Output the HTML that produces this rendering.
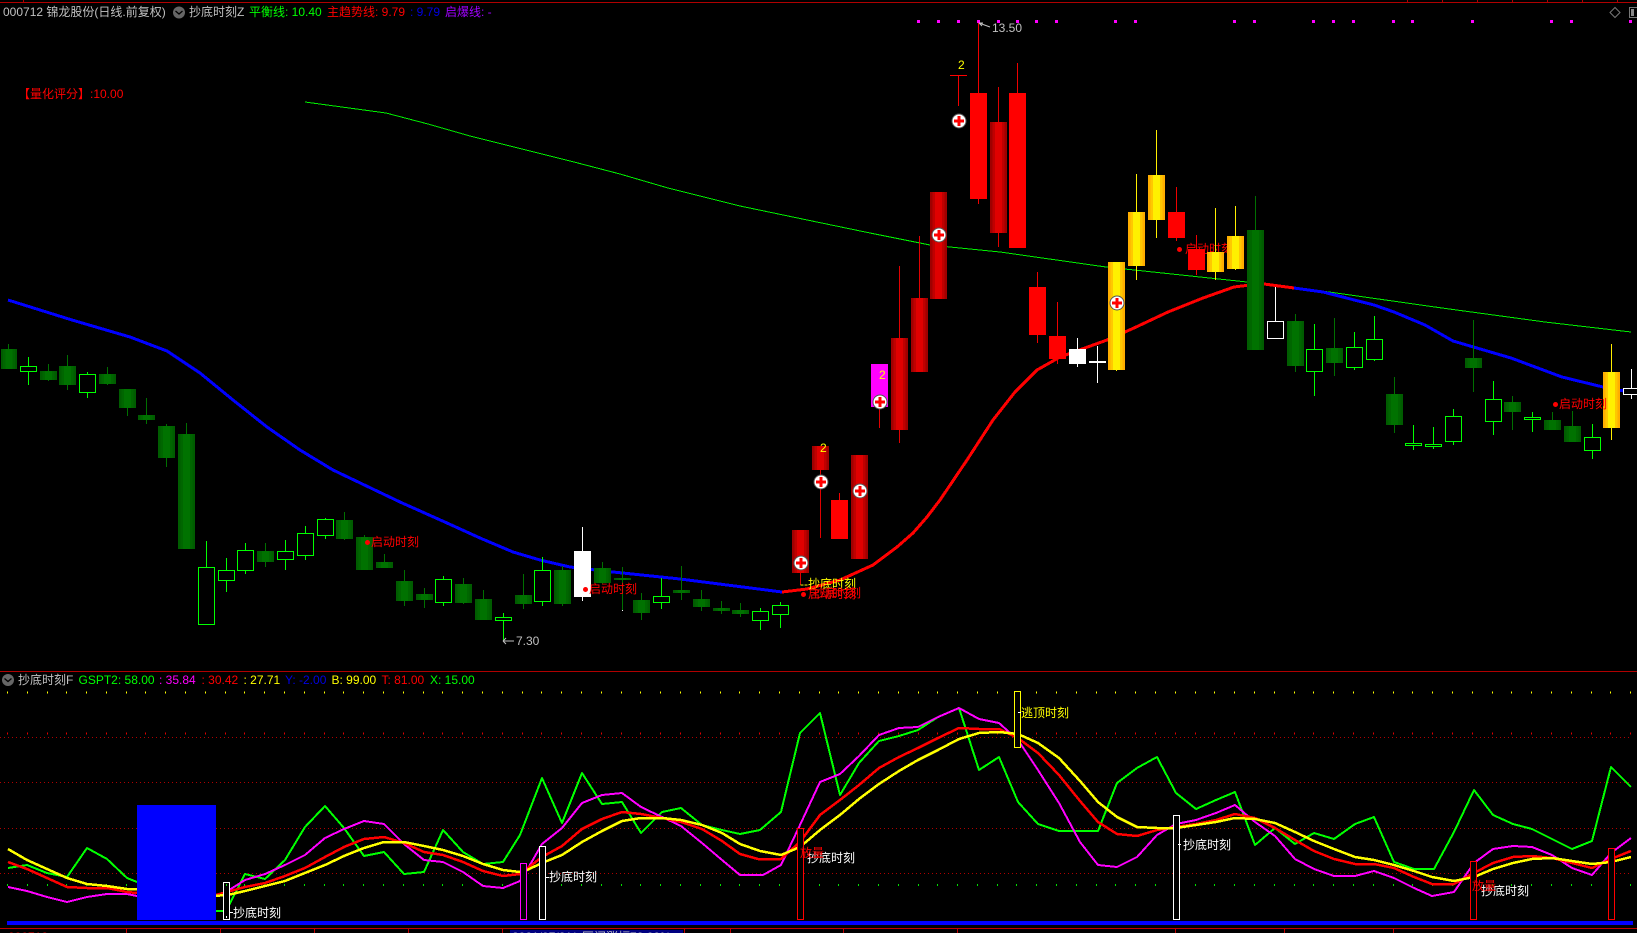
<!DOCTYPE html>
<html lang="zh"><head><meta charset="utf-8"><title>000712 锦龙股份</title>
<style>
html,body{margin:0;padding:0;background:#000;width:1637px;height:933px;overflow:hidden}
svg{display:block;position:absolute;left:0;top:0}
text{font-family:"Liberation Sans","WenQuanYi Zen Hei","Noto Sans CJK SC",sans-serif;font-size:12px;white-space:pre}
.c{shape-rendering:crispEdges}
.w{fill:none;stroke-width:1}
.l{fill:none;shape-rendering:crispEdges;stroke-linejoin:round}
</style></head><body>
<svg width="1637" height="933" viewBox="0 0 1637 933" xmlns="http://www.w3.org/2000/svg">
<defs>
<linearGradient id="gG"><stop offset="0" stop-color="#005c00"/><stop offset=".14" stop-color="#005c00"/><stop offset=".14" stop-color="#006600"/><stop offset=".28" stop-color="#006600"/><stop offset=".28" stop-color="#007200"/><stop offset=".72" stop-color="#007200"/><stop offset=".72" stop-color="#006600"/><stop offset=".86" stop-color="#006600"/><stop offset=".86" stop-color="#005c00"/><stop offset="1" stop-color="#005c00"/></linearGradient>
<linearGradient id="gR"><stop offset="0" stop-color="#a00000"/><stop offset=".14" stop-color="#a00000"/><stop offset=".14" stop-color="#c00000"/><stop offset=".28" stop-color="#c00000"/><stop offset=".28" stop-color="#e00000"/><stop offset=".72" stop-color="#e00000"/><stop offset=".72" stop-color="#c00000"/><stop offset=".86" stop-color="#c00000"/><stop offset=".86" stop-color="#a00000"/><stop offset="1" stop-color="#a00000"/></linearGradient>
<linearGradient id="gY"><stop offset="0" stop-color="#ffae00"/><stop offset=".14" stop-color="#ffae00"/><stop offset=".14" stop-color="#ffc800"/><stop offset=".28" stop-color="#ffc800"/><stop offset=".28" stop-color="#fff000"/><stop offset=".72" stop-color="#fff000"/><stop offset=".72" stop-color="#ffc800"/><stop offset=".86" stop-color="#ffc800"/><stop offset=".86" stop-color="#ffae00"/><stop offset="1" stop-color="#ffae00"/></linearGradient>
<path id="dots" d="M7 0h1M27 0h1M47 0h1M66 0h1M86 0h1M106 0h1M126 0h1M145 0h1M165 0h1M185 0h1M205 0h1M225 0h1M244 0h1M264 0h1M284 0h1M304 0h1M324 0h1M343 0h1M363 0h1M383 0h1M403 0h1M423 0h1M442 0h1M462 0h1M482 0h1M502 0h1M522 0h1M541 0h1M561 0h1M581 0h1M601 0h1M621 0h1M640 0h1M660 0h1M680 0h1M700 0h1M720 0h1M739 0h1M759 0h1M779 0h1M799 0h1M819 0h1M838 0h1M858 0h1M878 0h1M898 0h1M918 0h1M937 0h1M957 0h1M977 0h1M997 0h1M1016 0h1M1036 0h1M1056 0h1M1076 0h1M1096 0h1M1115 0h1M1135 0h1M1155 0h1M1175 0h1M1195 0h1M1214 0h1M1234 0h1M1254 0h1M1274 0h1M1294 0h1M1313 0h1M1333 0h1M1353 0h1M1373 0h1M1393 0h1M1412 0h1M1432 0h1M1452 0h1M1472 0h1M1492 0h1M1511 0h1M1531 0h1M1551 0h1M1571 0h1M1591 0h1M1610 0h1M1630 0h1"/>
<g id="plus"><circle r="7" fill="#fff" stroke="#555" stroke-width="1"/><path class="c" d="M-5 -1.500h10v3h-10zM-1.500 -5h3v10h-3z" fill="#f00"/></g>
</defs>
<rect width="1637" height="933" fill="#000"/>

<!-- frame -->
<path class="c" d="M0 2.500H1637M1407.500 0V2M1442.500 0V2M1477.500 0V2M1512.500 0V2M1547.500 0V2M1582.500 0V2M1617.500 0V2M23.500 0V2M0 671.500H1637" stroke="#b00000" fill="none"/>

<!-- header -->
<text x="3" y="16" fill="#c0c0c0">000712 锦龙股份(日线.前复权)</text>
<circle cx="179" cy="12.500" r="6" fill="#666"/><path d="M175.500 11l3.500 3 3.500-3" fill="none" stroke="#000" stroke-width="1.300"/>
<text x="189" y="16" fill="#c0c0c0">抄底时刻Z</text>
<text x="249" y="16" fill="#00ff00">平衡线: 10.40</text>
<text x="327" y="16" fill="#ff0000">主趋势线: 9.79</text>
<text x="410" y="16" fill="#0000e0">: 9.79</text>
<text x="445" y="16" fill="#a000ff">启爆线: -</text>
<text x="18" y="98" fill="#ff0000">【量化评分】:10.00</text>
<path d="M1615 7.500l5 5-5 5-5-5z" fill="none" stroke="#777" stroke-width="1"/>
<path class="c" d="M1637 7.500h-7.500v10h7.500" fill="none" stroke="#777"/><rect class="c" x="1631" y="9" width="3" height="7" fill="#888"/>

<!-- magenta dots -->
<path class="c" d="M917 20h3v3h-3zM937 20h3v3h-3zM957 20h3v3h-3zM977 20h3v3h-3zM997 20h3v3h-3zM1016 20h3v3h-3zM1035 20h3v3h-3zM1055 20h3v3h-3zM1114 20h3v3h-3zM1134 20h3v3h-3zM1233 20h3v3h-3zM1253 20h3v3h-3zM1312 20h3v3h-3zM1332 20h3v3h-3zM1352 20h3v3h-3zM1392 20h3v3h-3zM1411 20h3v3h-3zM1471 20h3v3h-3zM1550 20h3v3h-3zM1570 20h3v3h-3zM1629 20h3v3h-3z" fill="#ff00ff"/>

<!-- MA lines -->
<polyline class="l" stroke="#00ee00" stroke-width="1" points="305,102 386,113 428,124 470,136 522,149 574,162 620,174 668,188 740,206 800,218.500 870,233 930,245 1000,252 1106,267 1200,277 1247,282 1329,292 1442,308 1545,322 1631,332"/>
<polyline class="l" stroke="#0000ff" stroke-width="3" points="8,300 72,320 130,337 167,351 200,373 233,400 267,427 300,450 333,470 400,502 447,523 480,538 513,552 540,560 570,567 613,572 680,579 782,592"/>
<polyline class="l" stroke="#ff0000" stroke-width="3" points="782,592 807,589 840,580 873,565 897,547 913,533 927,517 940,500 967,460 993,420 1015,392 1037,370 1060,357 1107,340 1134,328 1168,312 1203,298 1234,287 1250,285 1264,284 1294,288"/>
<polyline class="l" stroke="#0000ff" stroke-width="3" points="1294,288 1323,292 1374,305 1394,312 1425,325 1453,341 1511,358 1562,377 1603,387 1624,391"/>

<!-- text behind candles -->
<circle cx="1179.500" cy="249.500" r="2.500" fill="#f00"/>
<text x="1185" y="253" fill="#f00">启动时刻</text>

<g class="c">
<!-- solid green wicks -->
<path class="w" stroke="#007000" d="M8.500 344V369M48.500 364V381M67.500 355V390M107.500 367V385M127.500 389V416M146.500 398V424M166.500 424V467M186.500 423V549M265.500 543V567M344.500 512V540M364.500 535V570M384.500 554V568M404.500 570V606M424.500 588V608M463.500 578V604M483.500 590V620M523.500 574V609M562.500 566V606M602.500 562V584M622.500 567V610M641.500 593V620M681.500 566V600M701.500 590V611M721.500 601V614M740.500 603V617M1255.500 196V350M1295.500 314V372M1334.500 318V376M1394.500 377V433M1473.500 320V392M1512.500 396V430M1552.500 412V430M1572.500 411V442"/>
<g fill="url(#gG)">
<rect x="1" y="349" width="16" height="20"/><rect x="40" y="371" width="17" height="9"/><rect x="59" y="366" width="17" height="19"/><rect x="99" y="374" width="17" height="10"/><rect x="119" y="389" width="17" height="19"/><rect x="138" y="415" width="17" height="5"/><rect x="158" y="426" width="17" height="32"/><rect x="178" y="434" width="17" height="115"/><rect x="257" y="551" width="17" height="11"/><rect x="336" y="520" width="17" height="19"/><rect x="356" y="537" width="17" height="33"/><rect x="376" y="562" width="17" height="6"/><rect x="396" y="581" width="17" height="20"/><rect x="416" y="594" width="17" height="6"/><rect x="455" y="584" width="17" height="19"/><rect x="475" y="599" width="17" height="21"/><rect x="515" y="595" width="17" height="9"/><rect x="554" y="570" width="17" height="34"/><rect x="594" y="568" width="17" height="15"/><rect x="614" y="578" width="17" height="2"/><rect x="633" y="600" width="17" height="13"/><rect x="673" y="590" width="17" height="3"/><rect x="693" y="599" width="17" height="8"/><rect x="713" y="608" width="17" height="3"/><rect x="732" y="610" width="17" height="4"/><rect x="1247" y="230" width="17" height="120"/><rect x="1287" y="321" width="17" height="45"/><rect x="1326" y="348" width="17" height="15"/><rect x="1386" y="394" width="17" height="31"/><rect x="1465" y="358" width="17" height="10"/><rect x="1504" y="402" width="17" height="10"/><rect x="1544" y="420" width="17" height="10"/><rect x="1564" y="426" width="17" height="16"/>
</g>
<rect x="622" y="610" width="1" height="1" fill="#fff"/>
<!-- hollow green -->
<path class="w" stroke="#00ff00" d="M28.500 357V385M87.500 372V398M206.500 541V625M226.500 558V592M245.500 543V574M285.500 540V570M305.500 526V560M325.500 518V539M443.500 576V606M503.500 613V641M542.500 557V606M661.500 578V609M760.500 608V630M780.500 602V628M1314.500 324V396M1354.500 332V370M1374.500 316V361M1413.500 425V450M1433.500 427V449M1453.500 409V445M1493.500 381V435M1532.500 412V432M1592.500 424V459"/>
<g fill="#000" stroke="#00ff00">
<rect x="20.500" y="366.500" width="16" height="5"/><rect x="79.500" y="374.500" width="16" height="18"/><rect x="198.500" y="567.500" width="16" height="57"/><rect x="218.500" y="570.500" width="16" height="10"/><rect x="237.500" y="550.500" width="16" height="20"/><rect x="277.500" y="551.500" width="16" height="8"/><rect x="297.500" y="533.500" width="16" height="22"/><rect x="317.500" y="519.500" width="16" height="16"/><rect x="435.500" y="579.500" width="16" height="23"/><rect x="495.500" y="617.500" width="16" height="3"/><rect x="534.500" y="570.500" width="16" height="31"/><rect x="653.500" y="596.500" width="16" height="6"/><rect x="752.500" y="611.500" width="16" height="9"/><rect x="772.500" y="605.500" width="16" height="9"/><rect x="1306.500" y="349.500" width="16" height="22"/><rect x="1346.500" y="347.500" width="16" height="20"/><rect x="1366.500" y="339.500" width="16" height="20"/><rect x="1405.500" y="443.500" width="16" height="2"/><rect x="1425.500" y="444.500" width="16" height="2"/><rect x="1445.500" y="416.500" width="16" height="25"/><rect x="1485.500" y="399.500" width="16" height="22"/><rect x="1524.500" y="417.500" width="16" height="2"/><rect x="1584.500" y="437.500" width="16" height="13"/>
</g>
<!-- white -->
<path class="w" stroke="#fff" d="M582.500 527V601M1077.500 338V367M1097.500 346V383M1275.500 287V321M1631.500 369V399"/>
<rect x="574" y="551" width="17" height="46" fill="#fff"/>
<rect x="1069" y="349" width="17" height="15" fill="#fff"/>
<rect x="1089" y="361" width="17" height="2" fill="#fff"/>
<rect x="1267.500" y="321.500" width="16" height="17" fill="#000" stroke="#fff"/>
<rect x="1623.500" y="388.500" width="16" height="6" fill="#000" stroke="#fff"/>
<!-- dark red -->
<path class="w" stroke="#e00000" d="M800.500 530V585M820.500 446V538M859.500 455V559M899.500 266V443M919.500 236V372M938.500 192V299M998.500 87V247M879.500 364V428"/>
<g fill="url(#gR)">
<rect x="792" y="530" width="17" height="43"/><rect x="812" y="446" width="17" height="24"/><rect x="851" y="455" width="17" height="104"/><rect x="891" y="338" width="17" height="92"/><rect x="911" y="298" width="17" height="74"/><rect x="930" y="192" width="17" height="107"/><rect x="990" y="122" width="17" height="111"/>
</g>
<rect x="871" y="364" width="17" height="43" fill="#ff00ff"/>
<!-- bright red -->
<path class="w" stroke="#f00000" d="M839.500 493V539M958.500 75V106M978.500 23V204M1017.500 63V248M1037.500 272V343M1057.500 302V364M1176.500 187V241M1196.500 235V275"/>
<g fill="#ff0000">
<rect x="831" y="500" width="17" height="39"/><rect x="950" y="75" width="17" height="1"/><rect x="970" y="93" width="17" height="106"/><rect x="1009" y="93" width="17" height="155"/><rect x="1029" y="287" width="17" height="48"/><rect x="1049" y="336" width="17" height="23"/><rect x="1168" y="212" width="17" height="26"/><rect x="1188" y="249" width="17" height="21"/>
</g>
<!-- gold -->
<path class="w" stroke="#ffee00" d="M1116.500 262V371M1136.500 174V280M1156.500 130V238M1215.500 208V280M1235.500 206V270M1611.500 344V440"/>
<g fill="url(#gY)">
<rect x="1108" y="262" width="17" height="108"/><rect x="1128" y="212" width="17" height="54"/><rect x="1148" y="175" width="17" height="45"/><rect x="1207" y="252" width="17" height="20"/><rect x="1227" y="236" width="17" height="33"/><rect x="1603" y="372" width="17" height="56"/>
</g>
</g>

<!-- plus markers -->
<use href="#plus" x="959" y="121"/><use href="#plus" x="939" y="235"/><use href="#plus" x="1117" y="303"/><use href="#plus" x="801" y="563"/><use href="#plus" x="821" y="482"/><use href="#plus" x="860" y="491"/><use href="#plus" x="880" y="402"/>
<text x="958" y="69" fill="#ffff00">2</text>
<text x="820" y="452" fill="#ffff00">2</text>
<text x="879" y="379" fill="#ffff00">2</text>

<!-- price labels -->
<path d="M979 23l11 4M979 23l3 3M979 23l4 0" fill="none" stroke="#c0c0c0"/>
<text x="992" y="32" fill="#c0c0c0">13.50</text>
<path d="M503 641h11M503 641l3-3M503 641l3 3" fill="none" stroke="#c0c0c0"/>
<text x="516" y="645" fill="#c0c0c0">7.30</text>

<!-- main-panel annotations -->
<circle cx="367.500" cy="542.500" r="2.500" fill="#f00"/><text x="371" y="546" fill="#f00">启动时刻</text>
<circle cx="585.500" cy="589.500" r="2.500" fill="#f00"/><text x="589" y="593" fill="#f00">启动时刻</text>
<text x="800" y="588" fill="#ffff00">--抄底时刻</text>
<circle cx="803.500" cy="594.500" r="2.500" fill="#f00"/><text x="808" y="598" fill="#f00">启动时刻</text><text x="813" y="597" fill="#f00">抄底时刻</text>
<circle cx="1555.500" cy="404.500" r="2.500" fill="#f00"/><text x="1559" y="408" fill="#f00">启动时刻</text>

<!-- lower header -->
<circle cx="8" cy="680" r="6" fill="#666"/><path d="M4.500 678.500l3.500 3 3.500-3" fill="none" stroke="#000" stroke-width="1.300"/>
<text x="18" y="684" fill="#c0c0c0">抄底时刻F</text>
<text x="78.500" y="684" fill="#00ff00">GSPT2: 58.00</text>
<text x="159" y="684" fill="#ff00ff">: 35.84</text>
<text x="201.500" y="684" fill="#ff0000">: 30.42</text>
<text x="243.500" y="684" fill="#ffff00">: 27.71</text>
<text x="285" y="684" fill="#0000e0">Y: -2.00</text>
<text x="331.500" y="684" fill="#ffff00">B: 99.00</text>
<text x="381.500" y="684" fill="#ff0000">T: 81.00</text>
<text x="430" y="684" fill="#00ff00">X: 15.00</text>

<!-- oscillator grid -->
<g class="c" fill="none">
<use href="#dots" y="692.500" stroke="#ffff00" stroke-width="2"/>
<use href="#dots" y="733.500" stroke="#e00000" stroke-width="2"/>
<use href="#dots" y="885" stroke="#00e000" stroke-width="2"/>
<path stroke="#b00000" stroke-dasharray="1 3" d="M0 737.500H1632M0 782.500H1632M0 828.500H1632M0 873.500H1632"/>
</g>

<!-- oscillator lines -->
<polyline class="l" stroke="#00ff00" stroke-width="2" points="8,868 27,865 47,873 67,877 87,848 107,859 127,878 137,882"/>
<polyline class="l" stroke="#00ff00" stroke-width="2" points="216,911 226,911 245,874 265,879 285,860 305,827 325,806 344,828 364,856 384,852 404,874 424,872 443,830 463,852 483,864 503,862 520,835 542,778 562,823 582,773 602,804 622,802 641,833 662,812 681,808 702,825 722,830 740,834 760,830 781,812 800,733 820,713 840,795 859,763 879,741 899,736 918,730 938,717 959,708 979,770 999,757 1018,802 1038,824 1059,831 1098,831 1117,783 1137,768 1157,757 1176,793 1196,809 1216,800 1235,792 1255,845 1275,828 1295,844 1314,833 1334,839 1355,824 1374,817 1394,862 1414,869 1434,869 1454,832 1474,790 1493,815 1513,824 1532,829 1552,839 1572,849 1592,841 1611,767 1631,787"/>
<polyline class="l" stroke="#ff00ff" stroke-width="2" points="8,887 27,891 47,897 67,902 87,897 107,894 127,894 137,896 216,895 226,892 245,880 265,874 285,865 305,855 325,838 344,829 364,821 384,824 404,844 424,860 443,862 463,872 483,886 503,888 520,881 527,870 542,844 562,828 582,803 602,795 622,793 641,807 662,817 681,826 702,843 722,860 740,875 763,875 781,865 800,825 820,782 840,774 859,756 879,735 899,728 918,727 938,717 959,708 979,719 999,723 1018,740 1038,770 1059,803 1080,842 1098,865 1117,867 1137,857 1157,835 1176,824 1196,820 1216,813 1235,805 1255,822 1275,836 1295,859 1314,869 1334,876 1355,876 1374,871 1394,878 1414,888 1432,896 1454,892 1474,863 1493,849 1513,846 1532,847 1552,855 1572,868 1592,875 1611,853 1631,838"/>
<polyline class="l" stroke="#ff0000" stroke-width="2.500" points="8,862 27,869 47,878 67,887 87,888 107,888 127,892 137,893 216,895 245,887 265,883 285,876 305,868 325,857 344,847 364,839 384,837 404,843 424,852 443,855 463,862 483,871 503,876 520,874 542,857 562,846 582,829 602,819 622,812 641,814 662,818 681,822 702,829 722,841 740,854 758,859 781,859 800,842 820,815 840,800 859,785 879,768 899,757 918,748 938,738 959,728 979,729 999,729 1018,738 1038,753 1059,775 1080,801 1098,822 1117,834 1137,836 1157,830 1176,827 1196,824 1216,820 1235,814 1255,818 1275,828 1295,840 1314,851 1334,859 1355,864 1374,864 1394,868 1414,877 1432,884 1454,884 1474,873 1493,863 1513,857 1532,856 1552,858 1572,863 1592,868 1611,859 1631,851"/>
<polyline class="l" stroke="#ffff00" stroke-width="2.500" points="8,849 27,860 47,869 67,878 87,884 107,886 127,889 137,889 216,896 232,894 245,891 265,886 285,881 305,873 325,865 344,856 364,848 384,842 404,842 424,846 443,850 463,856 483,864 503,870 520,872 527,870 542,863 562,855 582,842 602,831 622,821 641,818 662,818 681,820 702,825 722,833 740,844 760,851 781,855 800,847 820,830 840,815 859,799 879,784 899,771 918,760 938,750 959,739 979,733 999,732 1018,734 1038,743 1059,758 1080,781 1098,802 1117,817 1137,827 1157,828 1176,828 1196,825 1216,822 1235,818 1255,819 1275,823 1295,832 1314,841 1334,849 1355,857 1374,860 1394,865 1414,871 1432,877 1454,881 1474,877 1493,869 1513,863 1532,859 1552,858 1572,861 1592,864 1611,862 1631,857"/>

<!-- block and bars -->
<g class="c">
<rect x="137" y="805" width="79" height="115" fill="#0000ff"/>
<rect x="223.500" y="882.500" width="6" height="37" fill="#000" stroke="#fff"/>
<rect x="226" y="884" width="1" height="2" fill="#00e000"/><rect x="226" y="916" width="1" height="2" fill="#fff"/>
<rect x="520.500" y="863.500" width="6" height="56" fill="#000" stroke="#ff00ff"/>
<rect x="539.500" y="846.500" width="6" height="73" fill="#000" stroke="#fff"/>
<rect x="797.500" y="828.500" width="6" height="91" fill="#000" stroke="#f00"/>
<rect x="1014.500" y="691.500" width="6" height="56" fill="#000" stroke="#ffff00"/>
<rect x="1173.500" y="815.500" width="6" height="104" fill="#000" stroke="#fff"/>
<rect x="1470.500" y="861.500" width="6" height="58" fill="#000" stroke="#f00"/>
<rect x="1608.500" y="848.500" width="6" height="71" fill="#000" stroke="#f00"/>
<rect x="7" y="921" width="1626" height="4" fill="#0000ff"/>
<path d="M0 928.500H1637M126.500 929V933M220.500 929V933M314.500 929V933M408.500 929V933M502.500 929V933M684.500 929V933M730.500 929V933M843.500 929V933M957.500 929V933M1175.500 929V933M1284.500 929V933M1393.500 929V933" stroke="#c00000" fill="none"/>
<path d="M230 912.500h3M546 877.500h3M1018 712.500h3M1178 844.500h3" fill="none" stroke="#fff"/>
</g>
<text x="233" y="917" fill="#fff">抄底时刻</text>
<text x="549" y="881" fill="#fff">抄底时刻</text>
<text x="1021" y="717" fill="#ffff00">逃顶时刻</text>
<text x="1183" y="849" fill="#fff">抄底时刻</text>
<text x="807" y="862" fill="#fff">抄底时刻</text>
<text x="800" y="857" fill="#f00">放量</text>
<text x="1481" y="895" fill="#fff">抄底时刻</text>
<text x="1472" y="890" fill="#f00">放量</text>

<!-- bottom strip -->
<rect class="c" x="510" y="930" width="173" height="3" fill="#000080"/>
<text x="8" y="941" fill="#f00">000712</text>
<text x="512" y="941" fill="#c0c0c0">2021/07/21/  区间涨幅72.00%</text>
</svg>
</body></html>
